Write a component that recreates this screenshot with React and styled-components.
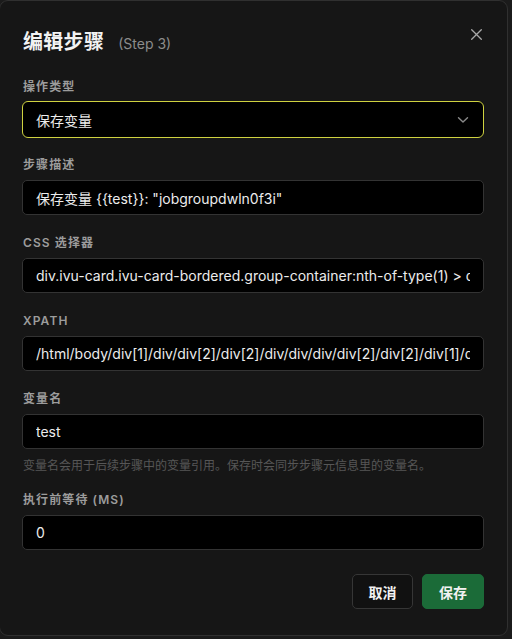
import React from "react";
import styled, { createGlobalStyle } from "styled-components";

const GlobalStyle = createGlobalStyle`
  html, body {
    margin: 0;
    padding: 0;
    background: #0c0c0c;
    font-family: Inter, "Noto Sans CJK SC", sans-serif;
  }
  * {
    box-sizing: border-box;
  }
`;

const Backdrop = styled.div`
  width: 512px;
  height: 639px;
  overflow: hidden;
  background: #1b1b1b;
`;

const Dialog = styled.div`
  width: 509px;
  height: 636px;
  margin-left: -1px;
  background: #161616;
  border: 1px solid #303030;
  border-radius: 9px;
  padding: 21px 23px 24px 22px;
  display: flex;
  flex-direction: column;
`;

const Header = styled.div`
  display: flex;
  align-items: center;
  justify-content: space-between;
  height: 36px;
  margin-bottom: 20px;
`;

const TitleGroup = styled.div`
  display: flex;
  align-items: baseline;
  gap: 14px;
  padding-left: 1px;
`;

const Title = styled.h2`
  margin: 0;
  font-size: 20px;
  font-weight: 700;
  color: #f2f2f2;
  letter-spacing: 0.3px;
`;

const StepTag = styled.span`
  font-size: 14px;
  color: #8c8c8c;
`;

const CloseButton = styled.button`
  width: 14px;
  height: 14px;
  padding: 0;
  margin-right: 1px;
  margin-top: -12px;
  border: none;
  background: transparent;
  display: flex;
  align-items: center;
  justify-content: center;
  color: #a8a8a8;
  cursor: pointer;
`;

const Field = styled.div`
  display: flex;
  flex-direction: column;
  margin-bottom: ${(p) => (p.$tight ? "0" : "19px")};
`;

const Label = styled.label`
  font-size: 12px;
  line-height: 17px;
  font-weight: 600;
  letter-spacing: 1.1px;
  text-transform: uppercase;
  color: #9c9c9c;
  margin-bottom: 7px;
  padding-left: 1px;
`;

const TextInput = styled.input`
  width: 462px;
  height: 35px;
  background: #000;
  border: 1px solid #333;
  border-radius: 5px;
  padding: 0 13px;
  font-family: Inter, "Noto Sans CJK SC", sans-serif;
  font-size: 14px;
  color: #ececec;
  outline: none;
`;

const Select = styled.div`
  width: 462px;
  height: 37px;
  background: #000;
  border: 1.5px solid #cfd240;
  border-radius: 6px;
  padding: 0 14px 0 13px;
  display: flex;
  align-items: center;
  justify-content: space-between;
  font-size: 14px;
  color: #ececec;
  margin-top: -1px;
  margin-bottom: -1px;
`;

const Hint = styled.p`
  margin: 9px 0 17px;
  font-size: 12px;
  line-height: 16px;
  color: #565656;
  padding-left: 1px;
`;

const Footer = styled.div`
  display: flex;
  justify-content: flex-end;
  gap: 9px;
  margin-top: 24px;
`;

const Button = styled.button`
  width: ${(p) => (p.$primary ? "62px" : "61px")};
  height: 35px;
  padding: 0;
  border-radius: 5px;
  border: 1px solid ${(p) => (p.$primary ? "#1b6b38" : "#363636")};
  background: ${(p) => (p.$primary ? "#1b6b38" : "#111")};
  color: #f2f2f2;
  font-family: Inter, "Noto Sans CJK SC", sans-serif;
  font-size: 14px;
  font-weight: 700;
  cursor: pointer;
`;

const fields = [
  { label: "步骤描述", value: '保存变量 {{test}}: "jobgroupdwln0f3i"' },
  {
    label: "CSS 选择器",
    value:
      "div.ivu-card.ivu-card-bordered.group-container:nth-of-type(1) > div.ivu-card-body",
  },
  {
    label: "XPath",
    value:
      "/html/body/div[1]/div/div[2]/div[2]/div/div/div/div[2]/div[2]/div[1]/div",
  },
];

export default function App() {
  return (
    <Backdrop>
      <GlobalStyle />
      <Dialog>
        <Header>
          <TitleGroup>
            <Title>编辑步骤</Title>
            <StepTag>(Step 3)</StepTag>
          </TitleGroup>
          <CloseButton aria-label="关闭">
            <svg width="11" height="11" viewBox="0 0 11 11">
              <path
                d="M0.7 0.7 L10.3 10.3 M10.3 0.7 L0.7 10.3"
                stroke="currentColor"
                strokeWidth="1.3"
                strokeLinecap="round"
              />
            </svg>
          </CloseButton>
        </Header>

        <Field>
          <Label>操作类型</Label>
          <Select>
            <span>保存变量</span>
            <svg width="12" height="8" viewBox="0 0 12 8">
              <path
                d="M1.5 1.8 L6 6 L10.5 1.8"
                fill="none"
                stroke="#8a8a8a"
                strokeWidth="1.4"
                strokeLinecap="round"
                strokeLinejoin="round"
              />
            </svg>
          </Select>
        </Field>

        {fields.map((f) => (
          <Field key={f.label}>
            <Label>{f.label}</Label>
            <TextInput defaultValue={f.value} readOnly />
          </Field>
        ))}

        <Field $tight>
          <Label>变量名</Label>
          <TextInput defaultValue="test" />
        </Field>
        <Hint>变量名会用于后续步骤中的变量引用。保存时会同步步骤元信息里的变量名。</Hint>

        <Field $tight>
          <Label>执行前等待 (ms)</Label>
          <TextInput defaultValue="0" />
        </Field>

        <Footer>
          <Button>取消</Button>
          <Button $primary>保存</Button>
        </Footer>
      </Dialog>
    </Backdrop>
  );
}
